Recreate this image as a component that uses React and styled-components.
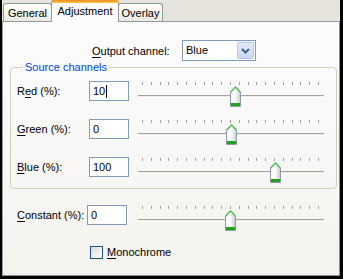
import React from 'react';
import styled, { createGlobalStyle } from 'styled-components';

const Global = createGlobalStyle`
  html, body { margin: 0; padding: 0; background: #fff; }
  body { font-family: Tahoma, "Liberation Sans", Arial, sans-serif; font-size: 11px; color: #000; }
  * { box-sizing: border-box; }
`;

const Frame = styled.div`
  width: 343px;
  height: 279px;
  display: flex;
  flex-direction: column;
  background: #e6e4dc;
  border-left: 2px solid #000;
  border-right: 3px solid #000;
  border-bottom: 3px solid #000;
`;

const TabStrip = styled.div`
  height: 21px;
  display: flex;
  align-items: flex-end;
  padding-left: 1px;
  position: relative;
  z-index: 2;
`;

const Tab = styled.div`
  width: ${p => p.w}px;
  height: ${p => (p.active ? 22 : 18)}px;
  margin: 0 ${p => (p.active ? -1 : 0)}px ${p => (p.active ? -1 : 0)}px;
  border: 1px solid #919b9c;
  border-bottom: none;
  border-radius: 3px 3px 0 0;
  background: ${p => (p.active ? '#fcfcfe' : 'linear-gradient(#fefefe, #f4f3ee 60%, #e9e8e1)')};
  display: flex;
  justify-content: center;
  align-items: center;
  padding-top: ${p => (p.active ? 0 : 1)}px;
  position: relative;
  z-index: ${p => (p.active ? 2 : 1)};
  ${p => p.active && `
    border-top: none;
    &::before {
      content: '';
      position: absolute;
      left: -1px; right: -1px; top: 0;
      height: 3px;
      border-radius: 3px 3px 0 0;
      background: linear-gradient(#e68b2c, #ffc73c);
    }
  `}
`;

const Panel = styled.div`
  flex: 1;
  border: 1px solid #919b9c;
  border-right-color: #8a9294;
  border-bottom-color: #8a9294;
  background: linear-gradient(#fcfcfe, #f4f3ee);
  padding-top: 18px;
  display: flex;
  flex-direction: column;
`;

const OutputRow = styled.div`
  display: flex;
  align-items: center;
  padding-left: 89px;
  height: 21px;
`;

const Label = styled.span`
  width: ${p => p.w}px;
  flex: none;
  line-height: 20px;
  white-space: nowrap;
`;

const U = styled.u`
  text-decoration: underline;
  text-underline-offset: 2px;
`;

const Select = styled.div`
  width: 74px;
  height: 21px;
  border: 1px solid #7f9db9;
  background: #fff;
  display: flex;
  align-items: stretch;
`;

const SelectText = styled.span`
  flex: 1;
  padding-left: 3px;
  line-height: 19px;
`;

const DropButton = styled.span`
  width: 17px;
  margin: 1px;
  border: 1px solid #b5c7ee;
  border-radius: 2px;
  background: linear-gradient(#e3ebfb, #c9d7f6);
  display: flex;
  align-items: center;
  justify-content: center;
`;

const Group = styled.fieldset`
  margin: 0 2px 0 7px;
  padding: 7px 0 5px 6px;
  border: 1px solid #d0d0bf;
  border-radius: 4px;
  display: flex;
  flex-direction: column;
  gap: 12px;
`;

const Legend = styled.legend`
  color: #0046d5;
  padding: 0 2px;
  margin-left: 6px;
  line-height: 13px;
`;

const Row = styled.div`
  display: flex;
  align-items: flex-start;
  padding-left: ${p => p.pl || 0}px;
  margin-top: ${p => p.mt || 0}px;
`;

const Field = styled.div`
  width: 40px;
  height: 20px;
  flex: none;
  border: 1px solid #7f9db9;
  background: #fff;
  padding-left: 3px;
  line-height: 18px;
  display: flex;
  align-items: center;
`;

const Caret = styled.span`
  width: 1px;
  height: 13px;
  background: #000;
  margin-left: 1px;
`;

const Slider = styled.div`
  width: 186px;
  height: 26px;
  margin-left: ${p => p.ml}px;
  position: relative;
  flex: none;
`;

const Ticks = styled.div`
  position: absolute;
  left: 4px;
  right: 5px;
  top: 1px;
  display: flex;
  justify-content: space-between;
`;

const Tick = styled.span`
  width: 1px;
  height: 3px;
  background: #a4a297;
`;

const Track = styled.div`
  position: absolute;
  left: 0;
  right: 0;
  top: 14px;
  height: 3px;
  border-top: 1px solid #a4a39e;
  border-bottom: 1px solid #fff;
  background: #ebeae4;
`;

const ThumbWrap = styled.div`
  position: absolute;
  top: 5px;
  width: 11px;
  height: 21px;
  margin-left: -5px;
`;

const Check = styled.span`
  width: 13px;
  height: 13px;
  border: 1px solid #1c5180;
  background: linear-gradient(135deg, #dcdcd7, #fff);
  margin-right: 4px;
`;

const CheckRow = styled.label`
  display: flex;
  align-items: center;
  padding-left: 87px;
  margin-top: 15px;
  line-height: 13px;
`;

const Thumb = ({ pos }) => (
  <ThumbWrap style={{ left: `${4 + pos * 1.76}px` }}>
    <svg width="11" height="21" viewBox="0 0 11 21">
      <defs>
        <linearGradient id="tb" x1="0" x2="1" y1="0" y2="0">
          <stop offset="0" stopColor="#f4f4f4" />
          <stop offset="0.45" stopColor="#ffffff" />
          <stop offset="1" stopColor="#c9c9c9" />
        </linearGradient>
      </defs>
      <path d="M0.5 6 L5.5 0.8 L10.5 6 L10.5 20.5 L0.5 20.5 Z" fill="url(#tb)" stroke="#8e9aa6" />
      <path d="M0.8 6 L5.5 1 L10.2 6" fill="none" stroke="#4fbf4f" strokeWidth="1.2" />
      <rect x="1" y="17" width="9" height="3" fill="#21a121" />
    </svg>
  </ThumbWrap>
);

const TrackBar = ({ pos, ml }) => (
  <Slider ml={ml}>
    <Ticks>
      {Array.from({ length: 21 }, (_, i) => <Tick key={i} />)}
    </Ticks>
    <Track />
    <Thumb pos={pos} />
  </Slider>
);

const channels = [
  { id: 'r', pre: 'R', u: 'e', post: 'd (%):', value: '10', pos: 52.8, caret: true },
  { id: 'g', pre: '', u: 'G', post: 'reen (%):', value: '0', pos: 50.5 },
  { id: 'b', pre: '', u: 'B', post: 'lue (%):', value: '100', pos: 75.6 },
];

const App = () => (
  <Frame>
    <Global />
    <TabStrip>
      <Tab w={49}>General</Tab>
      <Tab w={68} active>Adjustment</Tab>
      <Tab w={45}>Overlay</Tab>
    </TabStrip>
    <Panel>
      <OutputRow>
        <Label w={90}><U>O</U>utput channel:</Label>
        <Select>
          <SelectText>Blue</SelectText>
          <DropButton>
            <svg width="9" height="6" viewBox="0 0 9 6">
              <path d="M1 1 L4.5 4.5 L8 1" fill="none" stroke="#4d6185" strokeWidth="2" />
            </svg>
          </DropButton>
        </Select>
      </OutputRow>
      <Group>
        <Legend>Source channels</Legend>
        {channels.map(c => (
          <Row key={c.id}>
            <Label w={72}>{c.pre}<U>{c.u}</U>{c.post}</Label>
            <Field>{c.value}{c.caret && <Caret />}</Field>
            <TrackBar pos={c.pos} ml={9} />
          </Row>
        ))}
      </Group>
      <Row pl={14} mt={16}>
        <Label w={70}><U>C</U>onstant (%):</Label>
        <Field>0</Field>
        <TrackBar pos={50} ml={11} />
      </Row>
      <CheckRow>
        <Check />
        <span><U>M</U>onochrome</span>
      </CheckRow>
    </Panel>
  </Frame>
);

export default App;
